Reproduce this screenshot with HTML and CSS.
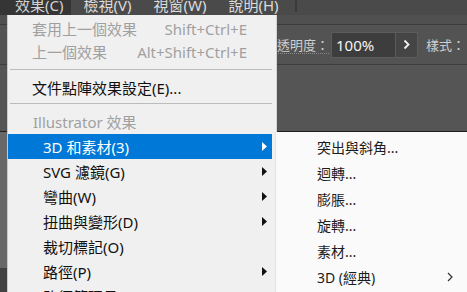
FILE: index.html
```html
<!DOCTYPE html>
<html lang="zh-Hant">
<head>
  <meta charset="UTF-8" />
  <title>效果選單</title>
  <meta name="viewport" content="width=device-width, initial-scale=1.0"/>
  <link rel="stylesheet" href="styles.css">
</head>
<body>

<div class="app">
  <div class="menubar">
    <span class="title active">效果(C)</span>
    <span class="title">檢視(V)</span>
    <span class="title">視窗(W)</span>
    <span class="title">說明(H)</span>
    <span class="divider"></span>
  </div>
  <div class="strip"></div>

  <div class="controlbar">
    <span class="label dotted">不透明度：</span>
    <div class="field">
      <span class="value">100%</span>
      <span class="more">
        <svg width="7" height="11" viewBox="0 0 7 11"><path d="M1.5 1.5l4 4-4 4" fill="none" stroke="#f2f2f2" stroke-width="1.8"/></svg>
      </span>
    </div>
    <span class="label">樣式：</span>
  </div>

  <div class="panel"></div>
  <div class="canvas"></div>
  <div class="footer"></div>

  <!-- Effect menu -->
  <div class="menu main">
    <div class="item disabled"><span>套用上一個效果</span><span class="key">Shift+Ctrl+E</span><span></span></div>
    <div class="item disabled"><span>上一個效果</span><span class="key">Alt+Shift+Ctrl+E</span><span></span></div>
    <div class="sep"></div>
    <div class="item"><span>文件點陣效果設定(E)...</span><span></span><span></span></div>
    <div class="sep second"></div>
    <div class="item header"><span>Illustrator 效果</span><span></span><span></span></div>
    <div class="item indent active"><span>3D 和素材(3)</span><span></span><span class="arrow"><svg width="5" height="9" viewBox="0 0 5 9"><path d="M0 0L5 4.5L0 9Z"/></svg></span></div>
    <div class="item indent"><span>SVG 濾鏡(G)</span><span></span><span class="arrow"><svg width="5" height="9" viewBox="0 0 5 9"><path d="M0 0L5 4.5L0 9Z"/></svg></span></div>
    <div class="item indent"><span>彎曲(W)</span><span></span><span class="arrow"><svg width="5" height="9" viewBox="0 0 5 9"><path d="M0 0L5 4.5L0 9Z"/></svg></span></div>
    <div class="item indent"><span>扭曲與變形(D)</span><span></span><span class="arrow"><svg width="5" height="9" viewBox="0 0 5 9"><path d="M0 0L5 4.5L0 9Z"/></svg></span></div>
    <div class="item indent"><span>裁切標記(O)</span><span></span><span></span></div>
    <div class="item indent"><span>路徑(P)</span><span></span><span class="arrow"><svg width="5" height="9" viewBox="0 0 5 9"><path d="M0 0L5 4.5L0 9Z"/></svg></span></div>
    <div class="item indent"><span>路徑管理員(F)</span><span></span><span class="arrow"><svg width="5" height="9" viewBox="0 0 5 9"><path d="M0 0L5 4.5L0 9Z"/></svg></span></div>
  </div>

  <!-- 3D submenu -->
  <div class="menu sub">
    <div class="item"><span>突出與斜角...</span></div>
    <div class="item"><span>迴轉...</span></div>
    <div class="item"><span>膨脹...</span></div>
    <div class="item"><span>旋轉...</span></div>
    <div class="item"><span>素材...</span></div>
    <div class="item"><span>3D (經典)</span><svg width="6" height="10" viewBox="0 0 6 10"><path d="M1 1l4 4-4 4" fill="none" stroke="#333" stroke-width="1.2"/></svg></div>
  </div>
</div>

</body>
</html>
```

FILE: styles.css
```css
html, body {
  margin: 0;
  padding: 0;
}
body {
  width: 467px;
  height: 292px;
  overflow: hidden;
  background: #535353;
  font-family: "Noto Sans", "Noto Sans CJK TC", sans-serif;
}
.app {
  position: relative;
  width: 467px;
  height: 292px;
  overflow: hidden;
}

/* app chrome */
.menubar {
  display: flex;
  height: 15px;
  background: #4a4a4a;
  color: #dcdcdc;
  font-size: 15px;
  line-height: 11px;
}
.title {
  padding: 0 10px 0 12px;
  white-space: nowrap;
}
.title.active {
  background: #353535;
  color: #d2d2d2;
  padding-left: 15px;
  padding-right: 8px;
}
.divider {
  width: 2px;
  height: 12px;
  margin-left: 6px;
  background: #3a3a3a;
}
.strip {
  height: 9px;
  background: #505050;
  border-bottom: 1px solid #3c3c3c;
}
.controlbar {
  display: flex;
  align-items: center;
  justify-content: flex-end;
  height: 39px;
  padding-right: 2px;
  background: #535353;
  border-bottom: 1px solid #3e3e3e;
  color: #cfcfcf;
  font-size: 13px;
}
.label {
  white-space: nowrap;
  line-height: 16px;
}
.label.dotted {
  border-bottom: 1px dotted #8a8a8a;
  margin-top: 2px;
  margin-right: 2px;
}
.field {
  display: flex;
  height: 26px;
  margin-right: 8px;
  border: 1px solid #5c5c5c;
  box-sizing: border-box;
}
.value {
  width: 59px;
  padding-left: 4px;
  background: #3d3d3d;
  color: #f4f4f4;
  font-size: 15px;
  line-height: 24px;
}
.more {
  display: flex;
  align-items: center;
  justify-content: center;
  width: 21px;
  background: #454545;
  border-left: 1px solid #5c5c5c;
}
.panel {
  height: 66px;
  background: #555555;
  border-bottom: 1px solid #1f1f1f;
}
.canvas {
  height: 136px;
  background: #686868;
}
.footer {
  height: 40px;
  background: #424242;
}

/* menus */
.menu {
  position: absolute;
  box-sizing: border-box;
}
.main {
  left: 7px;
  top: 15px;
  width: 270px;
  height: 300px;
  padding: 2px 4px 0 0;
  background: #f0f0f0;
  border-left: 1px solid #c9c9c9;
  border-right: 1px solid #d4d4d4;
  font-size: 15px;
  color: #111;
}
.main .item {
  display: grid;
  grid-template-columns: 1fr auto 25px;
  align-items: center;
  height: 23px;
  padding-left: 24px;
  white-space: nowrap;
}
.main .item.header {
  height: 25px;
  padding-left: 25px;
}
.main .item.indent {
  height: 25px;
  padding-left: 35px;
}
.main .disabled,
.main .header {
  color: #a0a0a0;
}
.main .active {
  background: #0078d7;
  color: #fff;
}
.arrow {
  display: flex;
  padding-left: 15px;
}
.arrow svg {
  fill: currentColor;
}
.active .arrow svg {
  fill: #fff;
}
.sep {
  height: 1px;
  margin: 6px 0 6px 2px;
  background: #bcbcbc;
}
.sep.second {
  margin: 4px 0 5px 2px;
}

.sub {
  left: 275px;
  top: 132px;
  width: 200px;
  height: 170px;
  padding-top: 2px;
  background: #fafafa;
  border-left: 1px solid #e2e2e2;
  font-size: 14px;
  color: #1c1c1c;
}
.sub .item {
  display: flex;
  align-items: center;
  justify-content: space-between;
  height: 26px;
  padding: 0 22px 0 41px;
  white-space: nowrap;
}
```
